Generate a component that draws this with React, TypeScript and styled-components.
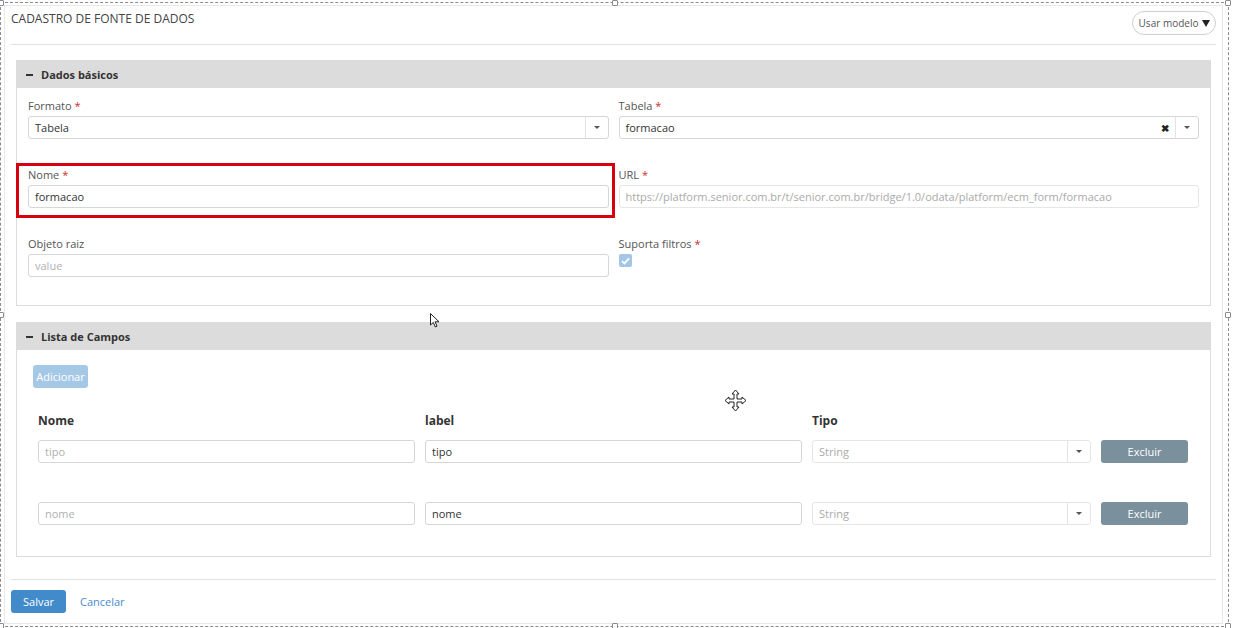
import React from "react";
import styled, { createGlobalStyle } from "styled-components";

const GlobalStyle = createGlobalStyle`
  html, body {
    margin: 0;
    padding: 0;
    background: #fff;
  }
  body {
    font-family: "Open Sans", "Liberation Sans", sans-serif;
    font-size: 11px;
    color: #333;
  }
  * {
    box-sizing: border-box;
  }
`;

const Stage = styled.div`
  position: relative;
  width: 1233px;
  height: 628px;
  overflow: hidden;
  padding-top: 2px;
`;

const Frame = styled.div`
  position: relative;
  width: 1229px;
  height: 625px;
  border: 1px dashed #8c8c8c;
  padding: 2px 5px 2px 3px;
`;

const Handle = styled.span<{ x: string; y: string }>`
  position: absolute;
  left: ${({ x }) => x};
  top: ${({ y }) => y};
  width: 6px;
  height: 6px;
  margin: -3px 0 0 -3px;
  background: #fff;
  border: 1px solid #8c8c8c;
  border-radius: 1px;
  z-index: 5;
`;

const Card = styled.div`
  height: 100%;
  border: 1px solid #e8e8e8;
  padding: 0 6px;
  display: flex;
  flex-direction: column;
`;

const Header = styled.div`
  display: flex;
  justify-content: space-between;
  align-items: flex-start;
  height: 39px;
  border-bottom: 1px solid #e2e2e2;
`;

const Title = styled.h1`
  margin: 5px 0 0;
  font-size: 12px;
  line-height: 16px;
  font-weight: 400;
  color: #444;
`;

const PillButton = styled.button`
  margin-top: 5px;
  height: 24px;
  width: 84px;
  padding: 0 0 0 1px;
  border: 1px solid #cfcfcf;
  border-radius: 12px;
  background: #fff;
  font-family: inherit;
  font-size: 10px;
  color: #555;
  display: flex;
  align-items: center;
  justify-content: center;
  gap: 4px;

  &::after {
    content: "";
    border-left: 4px solid transparent;
    border-right: 4px solid transparent;
    border-top: 7px solid #222;
  }
`;

const Panel = styled.section<{ top: number }>`
  margin: ${({ top }) => top}px 5px 0;
  border: 1px solid #dcdcdc;
`;

const PanelHeader = styled.div`
  height: 27px;
  background: #dcdcdc;
  display: flex;
  align-items: center;
  padding-left: 9px;
  gap: 8px;
  font-weight: 700;
  font-size: 11px;
  color: #333;
`;

const Minus = styled.span`
  width: 7px;
  height: 2px;
  background: #333;
`;

const FormBody = styled.div`
  display: grid;
  grid-template-columns: 1fr 1fr;
  column-gap: 10px;
  row-gap: 28px;
  padding: 10px 11px 28px;
`;

const Field = styled.div`
  position: relative;
  display: flex;
  flex-direction: column;
`;

const Highlight = styled.div`
  position: absolute;
  top: -4px;
  left: -12px;
  right: -6px;
  bottom: -10px;
  border: 3px solid #d7000f;
  pointer-events: none;
`;

const Label = styled.label`
  font-size: 11px;
  line-height: 15px;
  color: #555;
  margin-bottom: 3px;

  em {
    font-style: normal;
    color: #c9302c;
  }
`;

const TextInput = styled.input<{ muted?: boolean }>`
  height: 23px;
  width: 100%;
  border: 1px solid ${({ muted }) => (muted ? "#e6e6e6" : "#d6d6d6")};
  border-radius: 3px;
  padding: 0 6px;
  font-family: inherit;
  font-size: 11px;
  color: ${({ muted }) => (muted ? "#aaa" : "#333")};
  background: #fff;
  outline: none;

  &::placeholder {
    color: #b0b0b0;
  }
`;

const SelectBox = styled.div<{ muted?: boolean }>`
  height: 23px;
  display: flex;
  align-items: center;
  border: 1px solid ${({ muted }) => (muted ? "#e6e6e6" : "#d6d6d6")};
  border-radius: 3px;
  background: #fff;
  color: ${({ muted }) => (muted ? "#aaa" : "#333")};
`;

const SelectValue = styled.span`
  flex: 1;
  padding-left: 6px;
`;

const Clear = styled.span`
  width: 20px;
  text-align: center;
  font-weight: 700;
  font-size: 10px;
  color: #222;
`;

const Caret = styled.span`
  width: 23px;
  height: 100%;
  border-left: 1px solid #e3e3e3;
  display: flex;
  align-items: center;
  justify-content: center;

  &::after {
    content: "";
    border-left: 3px solid transparent;
    border-right: 3px solid transparent;
    border-top: 3px solid #555;
  }
`;

const Check = styled.span`
  width: 13px;
  height: 13px;
  border-radius: 2px;
  background: #a3c6e8;
  display: flex;
  align-items: center;
  justify-content: center;
`;

const ListBody = styled.div`
  padding: 15px 20px 31px 16px;
`;

const Button = styled.button<{ tone: "light" | "slate" | "primary"; w: number }>`
  display: block;
  height: 23px;
  width: ${({ w }) => w}px;
  padding: 0;
  border: none;
  border-radius: 3px;
  font-family: inherit;
  font-size: 11px;
  color: #fff;
  background: ${({ tone }) =>
    tone === "light" ? "#a6c8e7" : tone === "slate" ? "#7a909c" : "#428bca"};
`;

const FieldGrid = styled.div<{ top: number }>`
  display: grid;
  grid-template-columns: 377px 377px 279px 87px;
  column-gap: 10px;
  margin: ${({ top }) => top}px 0 0 5px;
`;

const ColHead = styled.div`
  font-weight: 700;
  font-size: 12px;
  line-height: 16px;
  color: #333;
`;

const Footer = styled.div`
  margin-top: 22px;
  border-top: 1px solid #e2e2e2;
  padding-top: 10px;
  display: flex;
  align-items: center;
  gap: 14px;
`;

const LinkText = styled.a`
  color: #4a8ccb;
  font-size: 11px;
  text-decoration: none;
`;

const Cursor = styled.svg<{ x: number; y: number }>`
  position: absolute;
  left: ${({ x }) => x}px;
  top: ${({ y }) => y}px;
  z-index: 6;
`;

const Select = ({ value, clear, muted }: { value: string; clear?: boolean; muted?: boolean }) => (
  <SelectBox muted={muted}>
    <SelectValue>{value}</SelectValue>
    {clear && <Clear>✖</Clear>}
    <Caret />
  </SelectBox>
);

const rows = [
  { nome: "tipo", label: "tipo" },
  { nome: "nome", label: "nome" },
];

export default function App() {
  return (
    <Stage>
      <GlobalStyle />
      <Frame>
        <Handle x="0" y="0" />
        <Handle x="50%" y="0" />
        <Handle x="100%" y="0" />
        <Handle x="0" y="50%" />
        <Handle x="100%" y="50%" />
        <Handle x="0" y="100%" />
        <Handle x="50%" y="100%" />
        <Handle x="100%" y="100%" />
        <Card>
          <Header>
            <Title>CADASTRO DE FONTE DE DADOS</Title>
            <PillButton>Usar modelo</PillButton>
          </Header>

          <Panel top={15}>
            <PanelHeader>
              <Minus />
              Dados básicos
            </PanelHeader>
            <FormBody>
              <Field>
                <Label>
                  Formato <em>*</em>
                </Label>
                <Select value="Tabela" />
              </Field>
              <Field>
                <Label>
                  Tabela <em>*</em>
                </Label>
                <Select value="formacao" clear />
              </Field>
              <Field>
                <Highlight />
                <Label>
                  Nome <em>*</em>
                </Label>
                <TextInput readOnly value="formacao" />
              </Field>
              <Field>
                <Label>
                  URL <em>*</em>
                </Label>
                <TextInput
                  muted
                  readOnly
                  value="https://platform.senior.com.br/t/senior.com.br/bridge/1.0/odata/platform/ecm_form/formacao"
                />
              </Field>
              <Field>
                <Label>Objeto raiz</Label>
                <TextInput readOnly placeholder="value" />
              </Field>
              <Field>
                <Label>
                  Suporta filtros <em>*</em>
                </Label>
                <Check>
                  <svg width="9" height="8" viewBox="0 0 9 8">
                    <path d="M1 4.2 L3.4 6.4 L8 1.4" fill="none" stroke="#fff" strokeWidth="1.8" />
                  </svg>
                </Check>
              </Field>
            </FormBody>
          </Panel>

          <Panel top={16}>
            <PanelHeader>
              <Minus />
              Lista de Campos
            </PanelHeader>
            <ListBody>
              <Button tone="light" w={55}>
                Adicionar
              </Button>
              <FieldGrid top={25}>
                <ColHead>Nome</ColHead>
                <ColHead>label</ColHead>
                <ColHead>Tipo</ColHead>
              </FieldGrid>
              {rows.map((r, i) => (
                <FieldGrid key={r.nome} top={i === 0 ? 11 : 39}>
                  <TextInput readOnly placeholder={r.nome} />
                  <TextInput readOnly value={r.label} />
                  <Select value="String" muted />
                  <Button tone="slate" w={87}>
                    Excluir
                  </Button>
                </FieldGrid>
              ))}
            </ListBody>
          </Panel>

          <Footer>
            <Button tone="primary" w={55}>
              Salvar
            </Button>
            <LinkText href="#">Cancelar</LinkText>
          </Footer>
        </Card>
      </Frame>

      <Cursor x={430} y={313} width="11" height="15" viewBox="0 0 11 15">
        <path d="M0.5 0.5 L0.5 12 L3.3 9.4 L5.3 14 L7 13.2 L5.1 8.8 L9 8.8 Z" fill="#fff" stroke="#222" strokeWidth="1" />
      </Cursor>
      <Cursor x={724} y={389} width="23" height="23" viewBox="0 0 23 23">
        <path
          d="M11.5 1 L15 5 L13 5 L13 10 L18 10 L18 8 L22 11.5 L18 15 L18 13 L13 13 L13 18 L15 18 L11.5 22 L8 18 L10 18 L10 13 L5 13 L5 15 L1 11.5 L5 8 L5 10 L10 10 L10 5 L8 5 Z"
          fill="#fff"
          stroke="#222"
          strokeWidth="1"
        />
      </Cursor>
    </Stage>
  );
}
